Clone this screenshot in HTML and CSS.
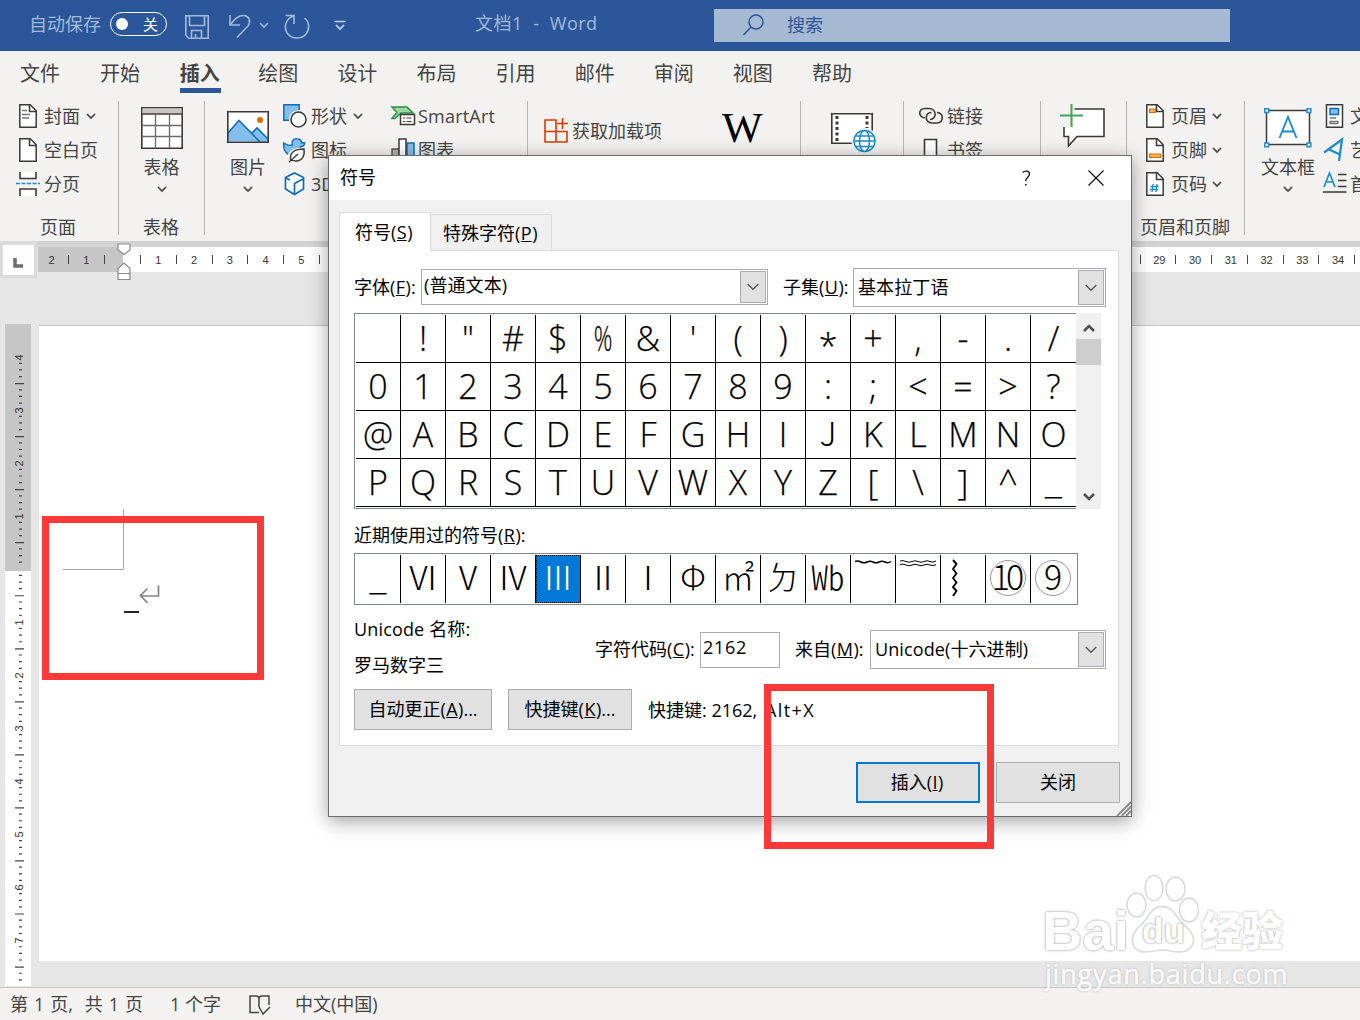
FILE: index.html
```html
<!DOCTYPE html>
<html lang="zh-CN">
<head>
<meta charset="utf-8">
<title>文档1 - Word</title>
<link rel="stylesheet" href="styles.css">
</head>
<body>
<svg class="defs" width="0" height="0">
  <symbol id="chev" viewBox="0 0 10 8"><path d="M1 2l4 4 4-4" fill="none" stroke="currentColor" stroke-width="1.7"/></symbol>
  <symbol id="doc" viewBox="0 0 18 24"><path d="M.8.8h10.4l6 6v16.4H.8z" fill="#fff" stroke="#3b3a39" stroke-width="1.5"/><path d="M10.5 1v6.5H17" fill="none" stroke="#3b3a39" stroke-width="1.5"/></symbol>
  <symbol id="combo" viewBox="0 0 12 8"><path d="M.7 1l5.3 5.3L11.3 1" fill="none" stroke="#555" stroke-width="1.3"/></symbol>
</svg>
<div class="app">
  <header class="titlebar">
    <span class="autosave">自动保存</span>
    <span class="toggle"><i class="knob"></i><b>关</b></span>
    <svg class="t-save" width="24" height="24" viewBox="0 0 24 24"><path d="M.8.8h22.4v22.4H3.8l-3-3zM4.5 1v9.5h15V1M6.5 23v-7.5h10V23M10.5 19v4" fill="none" stroke="#a3b9d8" stroke-width="1.6"/></svg>
    <svg class="t-undo" width="22" height="25" viewBox="0 0 22 25"><path d="M1 1v10h10M1.5 10.5C6 4 11 1 15.500 1.500c5 .8 6.500 6.500 3.500 10.500L8 23.500" fill="none" stroke="#a3b9d8" stroke-width="1.6"/></svg>
    <svg class="t-chev" width="10" height="8"><use href="#chev"/></svg>
    <svg class="t-redo" width="26" height="26" viewBox="0 0 26 26"><path d="M1.500 1.500h8.500v8.500M9.500 2C2 4.500 -1 13 3.500 19.500c4.500 6 14 6 18.500.5 4-5 3.500-12-1.500-16" fill="none" stroke="#a3b9d8" stroke-width="1.6"/></svg>
    <svg class="t-more" width="12" height="11" viewBox="0 0 12 11"><path d="M.5 1.500h11M2 5l4 4 4-4" fill="none" stroke="#c3d1e6" stroke-width="1.7"/></svg>
    <span class="doc-title">文档1&nbsp; -&nbsp; Word</span>
    <div class="search"><svg width="21" height="22" viewBox="0 0 21 22"><circle cx="13" cy="8" r="7" fill="none" stroke="#2b579a" stroke-width="1.500"/><path d="M8 13L.5 21" stroke="#2b579a" stroke-width="1.600"/></svg><span>搜索</span></div>
  </header>

  <nav class="tabs"><span class="first">文件</span><span>开始</span><span class="on">插入</span><span>绘图</span><span>设计</span><span>布局</span><span>引用</span><span>邮件</span><span>审阅</span><span>视图</span><span>帮助</span></nav>

  <section class="ribbon">
    <div class="group g-pages">
      <div class="rows">
        <div class="row"><svg width="24" height="24" viewBox="-3 0 24 24"><use href="#doc" width="18" height="24"/><path d="M3 6.500h5M3 10.500h8M3 14h7" stroke="#777" stroke-width="1.400"/></svg><span>封面</span><svg class="chev" width="10" height="8"><use href="#chev"/></svg></div>
        <div class="row"><svg width="24" height="24" viewBox="-3 0 24 24"><use href="#doc" width="18" height="24"/></svg><span>空白页</span></div>
        <div class="row"><svg width="24" height="24" viewBox="0 0 24 24"><path d="M4 0v6.500h16V0M4 24v-7h16v7" fill="#fff" stroke="#3b3a39" stroke-width="1.600"/><path d="M0 11.500h24" stroke="#1e8bcd" stroke-width="1.600" stroke-dasharray="4 1.500"/></svg><span>分页</span></div>
      </div>
      <div class="label">页面</div>
    </div>
    <div class="group g-table">
      <div class="big"><svg width="42" height="42" viewBox="0 0 42 42"><path d="M.8.8h40.400v40.400H.8z" fill="#fff" stroke="#3b3a39" stroke-width="1.600"/><path d="M1.500 1.500h39v5h-39z" fill="#c8c6c4"/><path d="M1 7h40" stroke="#3b3a39" stroke-width="1.500"/><path d="M14.500 7v34M28.500 7v34M1 18.500h40M1 29.500h40" stroke="#69686a" stroke-width="1.300"/></svg><span>表格</span><svg class="chev" width="10" height="8"><use href="#chev"/></svg></div>
      <div class="label">表格</div>
    </div>
    <div class="group g-illus">
      <div class="big"><svg width="42" height="42" viewBox="0 -4 42 42"><path d="M.8.800h40.400v30.400H.8z" fill="#fff"/><path d="M1 22L12 9.500 31 30.500H1zM25 23l5-6 11 11v3H31z" fill="#83beec"/><path d="M1 22L12 9.500 33 31M25 22l5-5 11 11" fill="none" stroke="#0f6cbd" stroke-width="1.600"/><path d="M.8.800h40.400v30.400H.8z" fill="none" stroke="#3b3a39" stroke-width="1.600"/><circle cx="33" cy="9" r="3" fill="#d86d00"/></svg><span>图片</span><svg class="chev" width="10" height="8"><use href="#chev"/></svg></div>
      <div class="rows shapes">
        <div class="row"><svg width="24" height="24" viewBox="0 0 24 24"><path d="M.8.800h15.400v15.400H.8z" fill="#83beec" stroke="#0f6cbd" stroke-width="1.500"/><circle cx="15.500" cy="15.500" r="9.500" fill="#f3f2f1"/><circle cx="15.500" cy="15.500" r="7.500" fill="#fff" stroke="#3b3a39" stroke-width="1.600"/></svg><span>形状</span><svg class="chev" width="10" height="8"><use href="#chev"/></svg></div>
        <div class="row"><svg width="24" height="24" viewBox="0 0 24 24"><path d="M.8 5c3 2 6 3 8.500 2C8 3 11 .500 14 .800c3 .2 4.500 2 4.500 4h3c0 3-2 4-4 4 3 7-2 9-8 9C3 17 0 12 .8 5z" fill="#83beec" stroke="#0f6cbd" stroke-width="1.400"/><path d="M6 22.500c-1-9 5-11.500 15-11.500 1 8-2 13-8 13-3 0-5-1-5-3z" fill="#fff" stroke="#f3f2f1" stroke-width="3"/><path d="M7.500 22C6.500 14 12 11 21 11c1 7-2 12-8 12-3 0-5-1-5.500-1zM6 24l9-8" fill="#fff" stroke="#3b3a39" stroke-width="1.400"/></svg><span>图标</span></div>
        <div class="row"><svg width="24" height="24" viewBox="0 0 24 24"><path d="M11.500 1l9 4.500v11.500l-9 5.500-9-5.500V5.500z" fill="#fff" stroke="#0f6cbd" stroke-width="1.700"/><path d="M3 6l4 2M11.500 22V11.500L20 7" fill="none" stroke="#0f6cbd" stroke-width="1.700"/></svg><span>3D</span></div>
      </div>
      <div class="rows smart">
        <div class="row"><svg width="24" height="24" viewBox="0 0 24 24"><path d="M1 3h15l6 6H10L4 14.500H1l5-6z" fill="#9bd8a2" stroke="#2f8f46" stroke-width="1.500"/><path d="M9.500 10.500h14v10h-14z" fill="#fff" stroke="#3b3a39" stroke-width="1.500"/><path d="M12 14h2M15.500 14h5M12 17.500h2M15.500 17.500h5" stroke="#3b3a39"/></svg><span>SmartArt</span></div>
        <div class="row"><svg width="24" height="24" viewBox="0 0 24 24"><path d="M1 11h7v12H1z" fill="#b5b3b1" stroke="#555" stroke-width="1.400"/><path d="M16 5h7v18h-7z" fill="#83beec" stroke="#0f6cbd" stroke-width="1.500"/><path d="M8 1h7v22H8z" fill="#fff" stroke="#3b3a39" stroke-width="1.500"/></svg><span>图表</span></div>
      </div>
    </div>
    <div class="group g-addins">
      <div class="addin"><svg width="25" height="25" viewBox="0 0 25 25"><path d="M1 2h11v22H1zM1 13.500h22V24H1" fill="none" stroke="#d83b01" stroke-width="1.600"/><path d="M18.500 0v11M13 5.500h11" stroke="#d83b01" stroke-width="1.600"/></svg><span>获取加载项</span></div>
      <b class="wiki">W</b>
    </div>
    <div class="group g-media"><svg width="46" height="40" viewBox="0 0 46 40"><path d="M.8.800h40.400v29.400H.8z" fill="#fff" stroke="#3b3a39" stroke-width="1.600"/><path d="M6 3v26M36 3v12" stroke="#3b3a39" stroke-width="3" stroke-dasharray="3 2.500"/><circle cx="33.500" cy="28" r="13" fill="#f3f2f1"/><g fill="#fff" stroke="#1e8bcd" stroke-width="1.500"><circle cx="33.500" cy="28" r="10.500"/><ellipse cx="33.500" cy="28" rx="5" ry="10.500"/><path d="M23 28h21M24.500 23h18M24.500 33.500h18" fill="none"/></g></svg></div>
    <div class="group g-links">
      <div class="rows">
        <div class="row"><svg width="24" height="24" viewBox="0 0 24 24"><path d="M6 14C-1 13 -1 5 6 4.500h4c8 0 8 11 1 11M18 8.500c7 .5 7 10 0 10.500h-5C5 18 6 8 12.500 8.500" fill="none" stroke="#3b3a39" stroke-width="1.600"/></svg><span>链接</span></div>
        <div class="row"><svg width="24" height="24" viewBox="0 0 24 24"><path d="M5.500 1.500h12V23l-6-4-6 4z" fill="#fff" stroke="#3b3a39" stroke-width="1.600"/></svg><span>书签</span></div>
      </div>
    </div>
    <div class="group g-comment"><svg width="46" height="44" viewBox="0 0 46 44"><path d="M4 5h40v27.500H17L8.500 42V32.500H4z" fill="#fff" stroke="#3b3a39" stroke-width="1.600"/><path d="M0 0h14.500v6H13v17H0z" fill="#f3f2f1"/><path d="M11.500 0v23M0 11.500h23" stroke="#41a65a" stroke-width="2"/></svg></div>
    <div class="group g-header">
      <div class="rows">
        <div class="row"><svg width="18" height="24"><use href="#doc"/><path d="M3.500 5h6v3.500h-6z" fill="#f9b35f" stroke="#d86d00" stroke-width="1.200"/></svg><span>页眉</span><svg class="chev" width="10" height="8"><use href="#chev"/></svg></div>
        <div class="row"><svg width="18" height="24"><use href="#doc"/><path d="M3.500 16h11v3.500h-11z" fill="#f9b35f" stroke="#d86d00" stroke-width="1.200"/></svg><span>页脚</span><svg class="chev" width="10" height="8"><use href="#chev"/></svg></div>
        <div class="row"><svg width="18" height="24"><use href="#doc"/><path d="M7 12l-1 8M11 12l-1 8M4.500 14.500h8M4 17.500h8" stroke="#1e8bcd" stroke-width="1.300"/></svg><span>页码</span><svg class="chev" width="10" height="8"><use href="#chev"/></svg></div>
      </div>
      <div class="label">页眉和页脚</div>
    </div>
    <div class="group g-text">
      <div class="big"><svg width="48" height="42" viewBox="0 0 48 42"><path d="M2.500 3.500h43v34h-43z" fill="#fff" stroke="#3b3a39" stroke-width="1.500"/><path d="M15.500 31L24 10l8.500 21M18.500 24.500h11" fill="none" stroke="#1e8bcd" stroke-width="1.900"/><g fill="#fff" stroke="#1e8bcd" stroke-width="1.500"><path d="M.8 1.800h3.800v3.800H.8zM43 1.800h3.800v3.800H43zM.8 36h3.800v3.800H.8zM43 36h3.800v3.800H43z"/></g></svg><span>文本框</span><svg class="chev" width="10" height="8"><use href="#chev"/></svg></div>
      <div class="rows">
        <div class="row"><svg width="24" height="24" viewBox="0 0 24 24"><path d="M3.500.800h16v22.400h-16z" fill="#fff" stroke="#3b3a39" stroke-width="1.500"/><path d="M7 4.500h8.500v6H7z" fill="#83beec" stroke="#0f6cbd" stroke-width="1.400"/><path d="M7 14h6M7 17.500h8v2H7z" fill="none" stroke="#777" stroke-width="1.300"/></svg><span>文</span></div>
        <div class="row"><svg width="24" height="24" viewBox="0 0 24 24"><path d="M1 14.500L19 1.500 16 23M6 11.500l11 5" fill="none" stroke="#1e8bcd" stroke-width="2.200"/></svg><span>艺</span></div>
        <div class="row"><svg width="24" height="24" viewBox="0 0 24 24"><path d="M1 15L6.500 1 12 15M3 10h7" fill="none" stroke="#1e8bcd" stroke-width="1.700"/><path d="M15 2.500h8.500M15 8.500h8.500M15 14.500h8.500M0 20h23.500" stroke="#3b3a39" stroke-width="1.500"/></svg><span>首</span></div>
      </div>
    </div>
  </section>

  <main class="work">
    <div class="hruler">
      <div class="corner"><svg width="31" height="30" viewBox="0 0 31 30"><path d="M12 13v8h8" fill="none" stroke="#6e6e6e" stroke-width="3.500"/></svg></div>
      <div class="scale">
        <div class="neg"><span>2</span><span>1</span><span></span></div>
        <div class="pos"><span>1</span><span>2</span><span>3</span><span>4</span><span>5</span><span></span></div>
        <div class="pos far"><span>29</span><span>30</span><span>31</span><span>32</span><span>33</span><span>34</span><span></span></div>
        <svg class="indent" width="14" height="38" viewBox="0 0 14 38"><path d="M1 1h12v6L7 11.500 1 7zM7 20l6 5.500V36.500H1V25.500zM1 30.500h12" fill="#fff" stroke="#8a8a8a" stroke-width="1.200"/></svg>
      </div>
    </div>
    <div class="canvas">
      <div class="vruler">
        <svg class="ticks" width="26" height="663" viewBox="0 0 26 663"><path d="M15.500 38.700V663" stroke="#444" stroke-width="3" stroke-dasharray="1.200 5.430 1.200 5.430 1.200 12.060 1.200 5.430 1.200 5.430 1.200 12.060"/><path d="M14.500 59V663" stroke="#444" stroke-width="9" stroke-dasharray="1.200 51.840"/></svg>
        <span>4</span><span>3</span><span>2</span><span>1</span><span></span><span>1</span><span>2</span><span>3</span><span>4</span><span>5</span><span>6</span><span>7</span>
      </div>
      <div class="page">
        <svg class="margin-mark" width="62" height="61"><path d="M60.500 0v60.500H0" fill="none" stroke="#a6a6a6"/></svg>
        <p class="line"><i class="typed"></i><svg width="21" height="19" viewBox="0 0 21 19"><path d="M19.500.500v10.500H1.500M8.500 3.500L1.500 10.500l7 7.500" fill="none" stroke="#858585" stroke-width="1.700"/></svg></p>
      </div>
    </div>
  </main>

  <footer class="status"><span class="s1">第 1 页,&nbsp; 共 1 页</span><span class="s2">1 个字</span><svg width="22" height="20" viewBox="0 0 22 20"><path d="M10 17.500H1V1h6c2 0 3 1 3 3v8M10 4c0-2 1-3 3-3h7v9M10 12l4 7 7-7" fill="none" stroke="#444" stroke-width="1.500"/></svg><span class="s3">中文(中国)</span></footer>

  <div class="dialog">
    <div class="d-title"><span>符号</span><svg width="10" height="17" viewBox="0 0 10 17"><path d="M1.500 2.500c3-2.500 7-1.500 7 1.500 0 3-3.800 3.500-3.800 7" fill="none" stroke="#111" stroke-width="1.300"/><path d="M4 14h1.600v1.600H4z" fill="#111"/></svg><svg class="x" width="16" height="16" viewBox="0 0 16 16"><path d="M.5.500l15 15M15.500.500l-15 15" stroke="#111" stroke-width="1.200"/></svg></div>
    <div class="d-tabs"><span class="on">符号(<u>S</u>)</span><span>特殊字符(<u>P</u>)</span></div>
    <div class="panel">
      <div class="fields">
        <label class="l-font">字体(<u>F</u>):</label>
        <div class="combo c-font"><span>(普通文本)</span><i><svg width="12" height="8"><use href="#combo"/></svg></i></div>
        <label class="l-sub">子集(<u>U</u>):</label>
        <div class="combo c-sub"><span>基本拉丁语</span><i><svg width="12" height="8"><use href="#combo"/></svg></i></div>
      </div>
      <div class="charset">
        <div class="chars">
          <b></b><b>!</b><b>"</b><b>#</b><b>$</b><b><em class="narrow">%</em></b><b>&amp;</b><b>'</b><b>(</b><b>)</b><b class="star">*</b><b>+</b><b>,</b><b>-</b><b>.</b><b>/</b>
          <b>0</b><b>1</b><b>2</b><b>3</b><b>4</b><b>5</b><b>6</b><b>7</b><b>8</b><b>9</b><b>:</b><b>;</b><b>&lt;</b><b>=</b><b>&gt;</b><b>?</b>
          <b>@</b><b>A</b><b>B</b><b>C</b><b>D</b><b>E</b><b>F</b><b>G</b><b>H</b><b>I</b><b class="alt">J</b><b>K</b><b>L</b><b>M</b><b>N</b><b>O</b>
          <b>P</b><b>Q</b><b>R</b><b>S</b><b>T</b><b>U</b><b>V</b><b>W</b><b>X</b><b>Y</b><b>Z</b><b>[</b><b>\</b><b>]</b><b>^</b><b class="alt">_</b>
        </div>
        <div class="scroll"><svg width="12" height="10" viewBox="0 0 12 10"><path d="M1 8l5-5 5 5" fill="none" stroke="#505050" stroke-width="2.600"/></svg><i></i><svg width="12" height="10" viewBox="0 0 12 10"><path d="M1 2l5 5 5-5" fill="none" stroke="#505050" stroke-width="2.600"/></svg></div>
      </div>
      <div class="l-recent">近期使用过的符号(<u>R</u>):</div>
      <div class="recent">
        <b>_</b><b>Ⅵ</b><b>Ⅴ</b><b>Ⅳ</b><b class="sel">Ⅲ</b><b>Ⅱ</b><b>Ⅰ</b><b>Φ</b><b>㎡</b><b>ㄉ</b><b>㏝</b>
        <b class="top"><svg width="36" height="5" viewBox="0 0 36 5"><path d="M0 1.500q3-1 6 .5t6 0 6 0 6 0 6 0 6-.5" fill="none" stroke="#000" stroke-width="1.500"/></svg></b>
        <b class="top"><svg width="36" height="8" viewBox="0 0 36 8"><path d="M0 1q3-1 6 .5t6 0 6 0 6 0 6 0 6-.5M0 4.500q3-1 6 .5t6 0 6 0 6 0 6 0 6-.5" fill="none" stroke="#000"/></svg></b>
        <b class="vert"><svg width="8" height="36" viewBox="0 0 8 36"><path d="M2 0l3.500 4L2 9l3.500 4.500L2 18l3.500 4.500L2 27l3.500 4L2 36" fill="none" stroke="#000" stroke-width="1.900" stroke-linejoin="round"/></svg></b>
        <b><em class="ring ten">10</em></b><b><em class="ring">9</em></b>
      </div>
      <div class="info">
        <div class="names"><div class="uni">Unicode 名称:</div><div>罗马数字三</div></div>
        <label class="l-code">字符代码(<u>C</u>):</label><div class="input">2162</div>
        <label class="l-from">来自(<u>M</u>):</label>
        <div class="combo c-from"><span>Unicode(十六进制)</span><i><svg width="12" height="8"><use href="#combo"/></svg></i></div>
      </div>
      <div class="actions"><div class="btn auto"><span>自动更正(<u>A</u>)...</span></div><div class="btn key"><span>快捷键(<u>K</u>)...</span></div><span class="hint">快捷键: 2162, <span class="alt-x">Alt+X</span></span></div>
    </div>
    <div class="d-foot"><div class="btn primary"><span>插入(<u>I</u>)</span></div><div class="btn"><span>关闭</span></div></div>
    <svg class="grip" width="15" height="15" viewBox="0 0 15 15"><path d="M1 15L15 1M5.500 15L15 5.500M10 15l5-5" stroke="#8c8c8c" stroke-width="2"/></svg>
  </div>

  <div class="mark mark-doc"></div>
  <div class="mark mark-btn"></div>

  <div class="watermark">
    <div class="wm-top"><span class="bai">Bai</span><div class="paw"><svg width="70" height="80" viewBox="0 0 70 80"><g fill="#fff" stroke="#d8d8d8" stroke-width="1.500"><ellipse cx="10.500" cy="31" rx="9.500" ry="12"/><ellipse cx="28" cy="14" rx="9" ry="12.500"/><ellipse cx="49.500" cy="15" rx="9.500" ry="12"/><ellipse cx="63" cy="36" rx="9.500" ry="12"/><path d="M36 32.500c10 0 13 8 18 14s13 11 13.500 19c0 9-8 13-15 12.500-6-.5-12-2-17-2s-9 2-16 2C10 78 5.500 72 6.500 64c1-8 8-12 13-18 5-7 8-13.500 16.500-13.500z"/></g></svg><span>du</span></div><span class="exp">经验</span></div>
    <div class="wm-url">jingyan.baidu.com</div>
  </div>
</div>
</body>
</html>
```
FILE: styles.css
```css
* { box-sizing: border-box; }
body { margin: 0; }
svg { display: block; flex: none; overflow: visible; }
u { padding: 0 .5px; }
.defs { position: absolute; }
.app {
  position: relative; width: 1360px; height: 1020px; overflow: hidden;
  display: flex; flex-direction: column; background: #e6e6e6;
  font-family: "Open Sans", "Noto Sans CJK SC", sans-serif;
  font-size: 18px; line-height: 24px; color: #444; white-space: nowrap;
}

/* title bar */
.titlebar { height: 51px; background: #2b579a; color: #a3b9d8; display: flex; align-items: flex-start; flex: none; }
.titlebar > * { flex: none; }
.autosave { width: 81px; margin: 12px 0 0 29px; }
.toggle { width: 57px; height: 24px; margin-top: 12px; border: 1.5px solid #fff; border-radius: 12px; display: flex; align-items: center; padding: 0 8px 0 5px; justify-content: space-between; color: #fff; }
.toggle b { font-size: 15px; font-weight: 400; line-height: 20px; }
.knob { width: 12px; height: 12px; border-radius: 6px; background: #fff; }
.t-save { margin: 15px 0 0 18px; }
.t-undo { margin: 14px 0 0 20px; }
.t-chev { margin: 21px 0 0 8px; }
.t-redo { margin: 14px 0 0 15px; }
.t-more { margin: 20px 0 0 24px; }
.doc-title { width: 239px; margin: 11px 0 0 129px; letter-spacing: .5px; }
.search { width: 516px; height: 33px; margin: 9px 0 0 0; background: #a6b9d3; color: #2b579a; display: flex; align-items: center; padding-left: 29px; gap: 23px; }
.search svg { margin-top: -2px; }
.search span { margin-top: -1px; }

/* ribbon tabs */
.tabs { height: 46px; flex: none; background: #f3f2f1; display: flex; gap: 39.100px; padding: 11px 0 0 20px; font-size: 20px; }
.tabs span { width: 40px; height: 31px; }
.tabs .first { width: 41px; }
.tabs .on { font-weight: 700; border-bottom: 5px solid #2b579a; width: 41px; margin: 0 -1.500px 0 .5px; }

/* ribbon */
.ribbon { height: 144px; flex: none; background: #f3f2f1; display: flex; padding-top: 4px; }
.group { height: 134px; flex: none; border-right: 1px solid #b8b6b4; display: flex; flex-wrap: wrap; align-content: flex-start; }
.label { width: 100%; height: 24px; text-align: center; margin-top: 3px; }
.rows { height: 113px; margin-top: -2px; }
.row { height: 34px; display: flex; align-items: center; }
.row span { margin-left: 4px; }
.chev { color: #444; }
.row .chev { margin-left: 6px; }
.big { height: 111px; display: flex; flex-direction: column; align-items: center; padding-top: 6px; }
.big span { margin-top: 6px; }
.big .chev { margin-top: 6px; }
.g-pages { width: 119px; padding-left: 16px; }
.g-pages .label { margin-left: -16px; width: 116px; }
.g-table { width: 86px; justify-content: center; }
.g-table .label { padding-right: 1px; }
.g-illus { width: 323px; padding-left: 22px; }
.shapes { margin-left: 14px; width: 108px; }
.smart .row span { margin-left: 3px; letter-spacing: .2px; }
.g-addins { width: 273px; padding-left: 16px; }
.addin { display: flex; align-items: center; height: 24px; margin-top: 18px; width: 178px; }
.addin svg { margin-top: -1px; }
.addin span { margin-left: 3px; }
.wiki { font: 400 43px/44px "Liberation Serif", serif; color: #000; margin-top: 5px; }
.g-media { width: 103px; padding: 12px 0 0 30px; }
.g-links { width: 137px; padding-left: 15px; }
.g-comment { width: 86px; padding: 3px 0 0 19px; }
.g-header { width: 118px; padding-left: 19px; }
.g-header .row span { margin-left: 7px; }
.g-header .row .chev { margin-left: 5px; }
.g-header .label { margin-left: -19px; width: 116px; }
.g-text { width: 115px; border: 0; padding-left: 16px; flex-wrap: nowrap; }
.g-text .rows { margin-left: 8px; }
.g-text .row span { margin-left: 3px; }

/* rulers and page */
.work { height: 746px; flex: none; display: flex; flex-direction: column; }
.hruler { height: 37px; display: flex; flex: none; background: linear-gradient(#d0d0d0 0, #d6d6d6 6px, #e6e6e6 6px); }
.corner { width: 37px; height: 37px; background: #dadada; padding: 4px 3px 3px; }
.corner svg { background: #fdfdfd; }
.scale { position: relative; margin: 6px 0 0 1px; width: 1322px; height: 25px; background: #fff; display: flex; font: 11px/26px "Liberation Sans", sans-serif; color: #333; }
.scale span { width: 35.750px; text-align: center; flex: none; background: linear-gradient(#444, #444) 0 8px / 1px 9px no-repeat; padding-left: 1px; }
.neg { width: 85px; background: #c6c6c6; display: flex; }
.neg span:first-child { background: none; width: 30px; padding-right: 4px; }
.pos { display: flex; margin-left: 17px; }
.pos.far { margin-left: 785px; }
.pos.far span { padding-left: 4px; }
.indent { position: absolute; left: 79px; top: -4px; }
.canvas { height: 709px; display: flex; align-items: flex-start; padding: 47px 0 0 5px; }
.vruler { position: relative; width: 26px; height: 662px; margin-top: -1px; background: linear-gradient(#c6c6c6 247px, #fff 247px); padding-top: 6.500px; flex: none; font: 11px/12px "Liberation Sans", sans-serif; color: #333; overflow: hidden; }
.vruler span { height: 53.050px; width: 26px; display: flex; align-items: center; justify-content: center; transform: rotate(-90deg); padding-top: 3px; }
.ticks { position: absolute; left: 0; top: 0; }
.page { width: 1321px; height: 636px; margin: 0 0 0 8px; background: #fff; border-top: 1px solid #c6c6c6; }
.margin-mark { margin: 183px 0 0 24px; }
.line { margin: 15px 0 0 85px; display: flex; align-items: flex-start; height: 30px; }
.typed { width: 15px; height: 2px; background: #222; margin-top: 26px; }

/* status bar */
.status { height: 33px; flex: none; background: #f3f2f1; border-top: 1px solid #c6c6c6; display: flex; padding: 4px 0 0 10px; }
.status svg { margin: 3px 0 0 0; }
.s1 { width: 160px; word-spacing: 1.300px; }
.s2 { width: 79px; }
.s3 { margin-left: 24px; }

/* dialog */
.dialog { position: absolute; left: 328px; top: 155px; width: 804px; height: 662px; background: #f0f0f0; border: 1px solid #6b6b6b; box-shadow: 0 4px 18px rgba(0,0,0,.38); color: #000; }
.d-title { height: 44px; background: #fff; display: flex; align-items: center; padding: 0 27px 0 11px; }
.d-title span { flex: 1; margin-top: -2px; }
.d-title .x { margin-left: 57px; }
.d-tabs { height: 50px; display: flex; padding: 12px 0 0 10px; align-items: flex-end; }
.d-tabs span { width: 121px; height: 36px; border: 1px solid #dcdcdc; border-width: 1px 1px 0 0; padding: 6px 0 0 12px; }
.d-tabs .on { width: 92px; height: 39px; border-width: 1px; border-bottom: 0; background: #fff; margin-bottom: -1px; padding: 7px 0 0 15px; position: relative; z-index: 1; }
.panel { width: 780px; height: 496px; margin-left: 10px; background: #fff; border: 1px solid #dcdcdc; padding: 17px 0 0 14px; }
.fields { display: flex; height: 45px; align-items: flex-start; }
.fields label { line-height: 24px; margin-top: 7px; }
.l-font { width: 67px; }
.l-sub { width: 70px; margin-left: 15px; }
.combo { border: 1px solid #abadb3; background: #fff; display: flex; padding: 1px; justify-content: space-between; height: 39px; align-items: center; }
.combo i { width: 26px; align-self: stretch; background: #e1e1e1; border: 1px solid #adadad; display: flex; align-items: center; justify-content: center; }
.c-font { width: 347px; height: 36px; margin-top: 1px; }
.combo.c-font span { margin: -4px 0 0 1px; letter-spacing: .1px; }
.c-sub { width: 253px; }
.c-sub span, .c-from span { margin: -2px 0 0 3px; letter-spacing: .1px; }
.charset { display: flex; height: 196px; }
.chars { width: 722px; border: 1px solid #828790; border-right: 0; padding: 1px 0 0 1px; display: grid; grid-template-columns: repeat(16, 45px); grid-template-rows: repeat(4, 48px); }
.chars b, .recent b { font: 300 33px/42px "Noto Sans CJK SC", sans-serif; text-align: center; border-right: 1px solid #000; border-bottom: 1px solid #000; }
.chars b { font: 300 34px/46px "Open Sans", sans-serif; -webkit-text-stroke: .25px #000; }
.chars .alt { font: 300 33px/43px "Noto Sans CJK SC", sans-serif; -webkit-text-stroke: 0; }
.chars b:nth-child(16n), .recent b:last-child { border-right: 0; }
.chars em { display: block; font-style: normal; transform: scaleX(.68); }
.chars .star { line-height: 62px; height: 48px; }
.scroll { width: 25px; background: #f0f0f0; display: flex; flex-direction: column; align-items: center; padding: 10px 0 7px; }
.scroll i { width: 25px; height: 26px; background: #cdcdcd; margin: 6px 0 auto; }
.l-recent { margin: 14px 0 6px; height: 24px; }
.recent { width: 724px; height: 52px; border: 1px solid #828790; padding: 1px; display: grid; grid-template-columns: repeat(16, 45px); grid-template-rows: 48px; }
.recent b { border-bottom: 0; line-height: 43px; }
.recent .sel { background: #0078d7; color: #fff; outline: 1px dotted #000; outline-offset: -1px; }
.recent .top { padding: 5px 0 0 4px; }
.recent .vert { padding: 5px 0 0 10px; }
.recent em { display: block; font-style: normal; width: 36px; height: 36px; border: 1px solid #999; border-radius: 50%; margin: 5px 0 0 4px; line-height: 30px; font-size: 34px; }
.recent .ten { letter-spacing: -4px; padding-right: 3px; text-indent: -1px; }
.info { display: flex; height: 84px; padding-top: 12px; align-items: flex-start; }
.names { width: 241px; display: flex; flex-direction: column; gap: 12px; }
.uni { letter-spacing: .15px; }
.l-code { width: 105px; margin-top: 20px; }
.input { width: 80px; height: 36px; border: 1px solid #abadb3; margin-top: 15px; padding: 2px 0 0 2px; letter-spacing: .7px; }
.l-from { margin: 20px 0 0 15px; width: 75px; }
.c-from { width: 236px; margin-top: 13px; }
.actions { display: flex; gap: 16px; align-items: center; }
.alt-x { letter-spacing: 1.400px; margin-left: 3px; }
.btn { width: 124px; height: 41px; background: #e1e1e1; border: 1px solid #adadad; display: flex; align-items: center; justify-content: center; }
.btn span { margin-top: -1px; }
.auto { width: 138px; }
.primary { border: 2px solid #0078d7; padding-right: 2px; }
.d-foot { display: flex; gap: 16px; justify-content: flex-end; padding: 16px 11px 0 0; }
.grip { position: absolute; right: 0; bottom: 0; overflow: hidden; }

/* annotations */
.mark { position: absolute; border: 7px solid #fc3939; }
.mark-doc { left: 42px; top: 516px; width: 222px; height: 164px; }
.mark-btn { left: 764px; top: 684px; width: 230px; height: 165px; }

/* watermark */
.watermark { position: absolute; left: 1042px; top: 873px; width: 260px; color: #fff; text-shadow: 0 0 2px #aaa, 0 0 1px #bbb, 0 0 3px #ccc; }
.wm-top { display: flex; height: 86px; }
.bai { font: 700 56px/48px "Liberation Sans", sans-serif; margin-top: 34px; width: 84px; -webkit-text-stroke: 2px #fff; paint-order: stroke; }
.paw { position: relative; width: 70px; padding-top: 1px; }
.paw span { position: absolute; left: 16px; top: 38px; font: 700 35px/40px "Liberation Sans", sans-serif; }
.exp { font-size: 41px; font-weight: 900; line-height: 52px; margin: 31px 0 0 5px; -webkit-text-stroke: .5px #fff; }
.wm-url { font-size: 27px; line-height: 30px; margin: 0 0 0 3px; letter-spacing: .8px; opacity: .85; -webkit-text-stroke: .6px #fff; }
```
